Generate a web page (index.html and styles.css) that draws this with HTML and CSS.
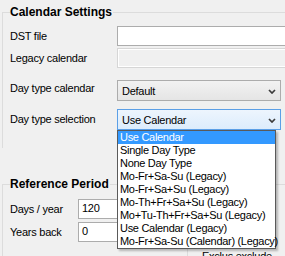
FILE: index.html
```html
<!DOCTYPE html>
<html>
<head>
<meta charset="utf-8">
<link rel="stylesheet" href="styles.css">
</head>
<body>
<div class="page">
  <section class="group cal">
    <div class="group-title">Calendar Settings</div>
    <div class="row first">
      <span class="lbl">DST file</span>
      <div class="textbox wide"></div>
    </div>
    <div class="row">
      <span class="lbl">Legacy calendar</span>
      <div class="textbox wide disabled"></div>
    </div>
    <div class="row gap-lg">
      <span class="lbl up">Day type calendar</span>
      <div class="combo">
        <span class="combo-text">Default</span>
        <svg class="chev" width="8" height="5" viewBox="0 0 8 5"><polyline points="1,1 4,4 7,1" fill="none" stroke="#3c3c3c" stroke-width="1.7"/></svg>
      </div>
    </div>
    <div class="row gap-md">
      <span class="lbl">Day type selection</span>
      <div class="combo active">
        <span class="combo-text">Use Calendar</span>
        <svg class="chev" width="8" height="5" viewBox="0 0 8 5"><polyline points="1,1 4,4 7,1" fill="none" stroke="#3c3c3c" stroke-width="1.7"/></svg>
      </div>
    </div>
  </section>

  <section class="group ref">
    <div class="group-title">Reference Period</div>
    <div class="row small first">
      <span class="lbl">Days / year</span>
      <div class="textbox num">120</div>
    </div>
    <div class="row small next">
      <span class="lbl">Years back</span>
      <div class="textbox num">0</div>
    </div>
    <div class="excl">
      <span class="excl-text">Exclus exclude</span>
    </div>
  </section>

  <ul class="dropdown">
    <li class="sel">Use Calendar</li>
    <li>Single Day Type</li>
    <li>None Day Type</li>
    <li>Mo-Fr+Sa-Su (Legacy)</li>
    <li>Mo-Fr+Sa+Su (Legacy)</li>
    <li>Mo-Th+Fr+Sa+Su (Legacy)</li>
    <li>Mo+Tu-Th+Fr+Sa+Su (Legacy)</li>
    <li>Use Calendar (Legacy)</li>
    <li>Mo-Fr+Sa-Su (Calendar) (Legacy)</li>
  </ul>
</div>
</body>
</html>
```

FILE: styles.css
```css
* { box-sizing: border-box; }
html, body {
  margin: 0;
  padding: 0;
  background: #f0f0f0;
}
body {
  width: 285px;
  height: 256px;
  overflow: hidden;
  font-family: "Liberation Sans", Arial, sans-serif;
  font-size: 11px;
  letter-spacing: -0.25px;
  color: #000;
}
.page {
  position: relative;
  width: 285px;
  height: 256px;
  display: flex;
  flex-direction: column;
}
.group {
  width: 320px;
  margin-left: 2px;
  border-top: 1px solid #dcdcdc;
  border-left: 1px solid #dcdcdc;
  padding-left: 7px;
}
.cal {
  margin-top: 12px;
  padding-bottom: 18px;
}
.ref {
  margin-top: 36px;
  flex: 1;
}
.group-title {
  width: fit-content;
  margin-top: -8px;
  padding: 0 1px 0 0;
  background: #f0f0f0;
  font-weight: bold;
  font-size: 12px;
  line-height: 14px;
  letter-spacing: 0;
}
.row {
  display: flex;
  align-items: center;
  height: 20px;
  margin-top: 2px;
}
.row.first { margin-top: 7px; }
.row.gap-lg { margin-top: 12px; height: 21px; }
.row.gap-md { margin-top: 8px; height: 21px; }
.lbl {
  width: 107px;
  flex: none;
  line-height: 13px;
}
.lbl.up { margin-bottom: 4px; }
.row.small .lbl { width: 68px; }
.row.small.first { margin-top: 8px; }
.row.small.next { margin-top: 3px; }

.textbox {
  height: 20px;
  background: #fff;
  border: 1px solid #acacac;
  line-height: 17px;
  padding-left: 3px;
}
.textbox.wide { width: 190px; }
.textbox.disabled {
  background: #f0f0f0;
  border-color: #d6d6d6;
  box-shadow: inset 0 0 0 1px #fff;
}
.textbox.num {
  width: 70px;
}

.combo {
  width: 164px;
  height: 21px;
  display: flex;
  align-items: center;
  justify-content: space-between;
  padding: 0 4px 0 4px;
  border: 1px solid #acacac;
  background: linear-gradient(#f2f2f2, #e5e5e5);
}
.combo.active {
  border-color: #5b9fe6;
  background: linear-gradient(#edf5fd, #dcecfc);
}
.combo-text {
  line-height: 14px;
}
.chev { display: block; margin-top: 1px; }

.excl {
  margin-left: 177px;
  margin-top: 1px;
  border-left: 1px solid #dcdcdc;
  height: 20px;
  padding-left: 14px;
  padding-top: 7px;
}
.excl-text { line-height: 13px; }

.dropdown {
  position: absolute;
  left: 117px;
  top: 130px;
  width: 159px;
  margin: 0;
  padding: 0;
  list-style: none;
  background: #fff;
  border: 1px solid #5a5a5a;
  box-shadow: 2px 2px 2px rgba(0, 0, 0, 0.25);
}
.dropdown li {
  height: 13px;
  line-height: 13px;
  padding-left: 2px;
  white-space: nowrap;
  letter-spacing: -0.3px;
}
.dropdown li.sel {
  background: #3399ff;
  color: #fff;
}
```
